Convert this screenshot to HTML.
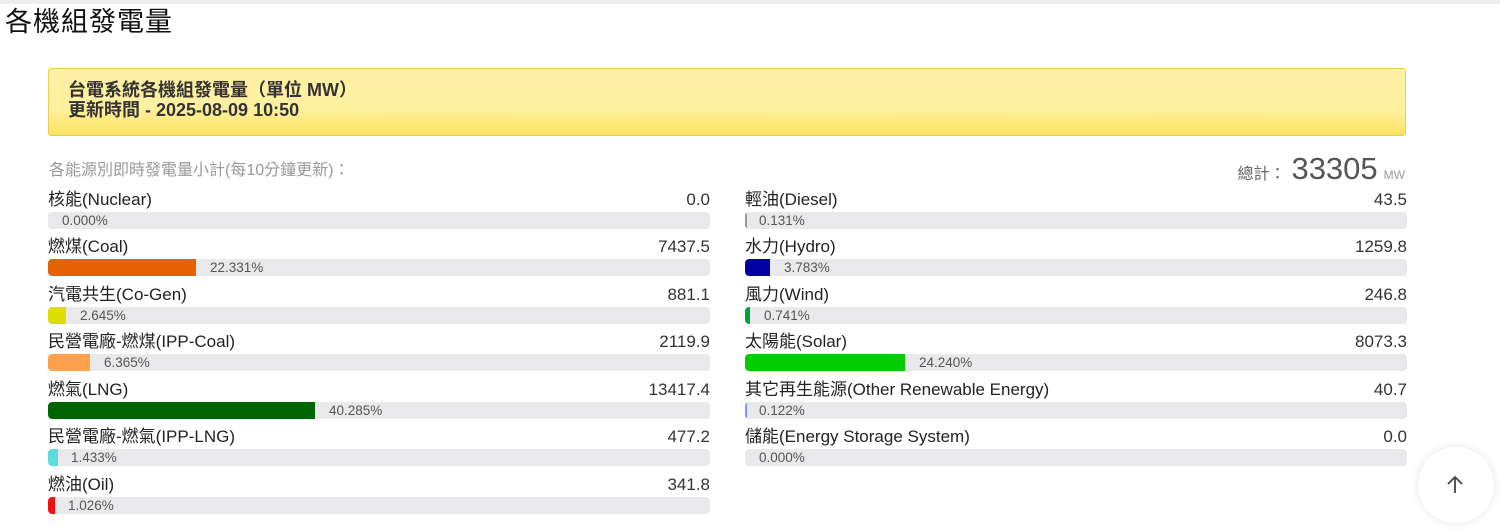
<!DOCTYPE html>
<html><head><meta charset="utf-8"><style>
body{margin:0;width:1500px;height:530px;background:#fff;font-family:"Liberation Sans","Noto Sans CJK TC",sans-serif;position:relative;overflow:hidden;color:#222}
.top{position:absolute;left:0;top:0;width:1500px;height:4px;background:#eee}
h1{position:absolute;left:5px;top:5px;margin:0;font-size:27px;line-height:34px;font-weight:400;color:#111;letter-spacing:1px}
.box{position:absolute;left:48px;top:68px;width:1356px;height:66px;border:1px solid #e9cf55;border-radius:3px;background:linear-gradient(#fff0a6,#fff0a0 60%,#fbe35e)}
.box div{position:absolute;left:19px;font-weight:700;font-size:18px;line-height:22px;color:#333}
.sub{position:absolute;left:49px;top:161px;font-size:16px;line-height:20px;color:#999}
.tot{position:absolute;right:95px;top:151px;color:#666;font-size:16px;line-height:36px}
.tot b{font-weight:400;font-size:31px;color:#555;margin:0 6px}
.tot small{font-size:12px;color:#999}
.r{position:absolute;width:662px;height:48px}
.r .l{position:absolute;left:0;top:-9px;font-size:17px;line-height:22px;color:#222;white-space:nowrap}
.r .v{position:absolute;right:0;top:-9px;font-size:17px;line-height:22px;color:#333}
.r .t{position:absolute;left:0;top:14px;width:662px;height:17px;background:#e9e9ec;border-radius:4px;overflow:hidden}
.r .f{position:absolute;left:0;top:0;height:17px;border-radius:4px 0 0 4px}
.r .p{position:absolute;top:14px;font-size:13.5px;color:#555;line-height:18px}
.up{position:absolute;left:1418px;top:447px;width:76px;height:76px;border-radius:50%;background:#fff;box-shadow:0 0 10px rgba(0,0,0,.1)}
</style></head><body>
<div class="top"></div>
<h1>各機組發電量</h1>
<div class="box"><div style="top:10px">台電系統各機組發電量（單位 MW）</div><div style="top:30px">更新時間 - 2025-08-09 10:50</div></div>
<div class="sub">各能源別即時發電量小計(每10分鐘更新)：</div>
<div class="tot">總計：<b>33305</b><small>MW</small></div>

<div class="r" style="left:48px;top:198px"><span class="l">核能(Nuclear)</span><span class="v">0.0</span><div class="t"></div><span class="p" style="left:14px">0.000%</span></div>
<div class="r" style="left:48px;top:245px"><span class="l">燃煤(Coal)</span><span class="v">7437.5</span><div class="t"><div class="f" style="width:148px;background:#e66100"></div></div><span class="p" style="left:162px">22.331%</span></div>
<div class="r" style="left:48px;top:293px"><span class="l">汽電共生(Co-Gen)</span><span class="v">881.1</span><div class="t"><div class="f" style="width:18px;background:#dede00"></div></div><span class="p" style="left:32px">2.645%</span></div>
<div class="r" style="left:48px;top:340px"><span class="l">民營電廠-燃煤(IPP-Coal)</span><span class="v">2119.9</span><div class="t"><div class="f" style="width:42px;background:#ffa04c"></div></div><span class="p" style="left:56px">6.365%</span></div>
<div class="r" style="left:48px;top:388px"><span class="l">燃氣(LNG)</span><span class="v">13417.4</span><div class="t"><div class="f" style="width:267px;background:#006400"></div></div><span class="p" style="left:281px">40.285%</span></div>
<div class="r" style="left:48px;top:435px"><span class="l">民營電廠-燃氣(IPP-LNG)</span><span class="v">477.2</span><div class="t"><div class="f" style="width:10px;background:#5cdcdc"></div></div><span class="p" style="left:23px">1.433%</span></div>
<div class="r" style="left:48px;top:483px"><span class="l">燃油(Oil)</span><span class="v">341.8</span><div class="t"><div class="f" style="width:7px;background:#ee1111"></div></div><span class="p" style="left:20px">1.026%</span></div>

<div class="r" style="left:745px;top:198px"><span class="l">輕油(Diesel)</span><span class="v">43.5</span><div class="t"><div class="f" style="width:2px;background:#999"></div></div><span class="p" style="left:14px">0.131%</span></div>
<div class="r" style="left:745px;top:245px"><span class="l">水力(Hydro)</span><span class="v">1259.8</span><div class="t"><div class="f" style="width:25px;background:#0000a0"></div></div><span class="p" style="left:39px">3.783%</span></div>
<div class="r" style="left:745px;top:293px"><span class="l">風力(Wind)</span><span class="v">246.8</span><div class="t"><div class="f" style="width:5px;background:#00a040"></div></div><span class="p" style="left:19px">0.741%</span></div>
<div class="r" style="left:745px;top:340px"><span class="l">太陽能(Solar)</span><span class="v">8073.3</span><div class="t"><div class="f" style="width:160px;background:#00cc00"></div></div><span class="p" style="left:174px">24.240%</span></div>
<div class="r" style="left:745px;top:388px"><span class="l">其它再生能源(Other Renewable Energy)</span><span class="v">40.7</span><div class="t"><div class="f" style="width:2px;background:#7799ff"></div></div><span class="p" style="left:14px">0.122%</span></div>
<div class="r" style="left:745px;top:435px"><span class="l">儲能(Energy Storage System)</span><span class="v">0.0</span><div class="t"></div><span class="p" style="left:14px">0.000%</span></div>

<div class="up"><svg width="76" height="76" viewBox="0 0 76 76"><path d="M37 46V30M30 37l7-7 7 7" stroke="#444" stroke-width="1.8" fill="none"/></svg></div>
</body></html>
